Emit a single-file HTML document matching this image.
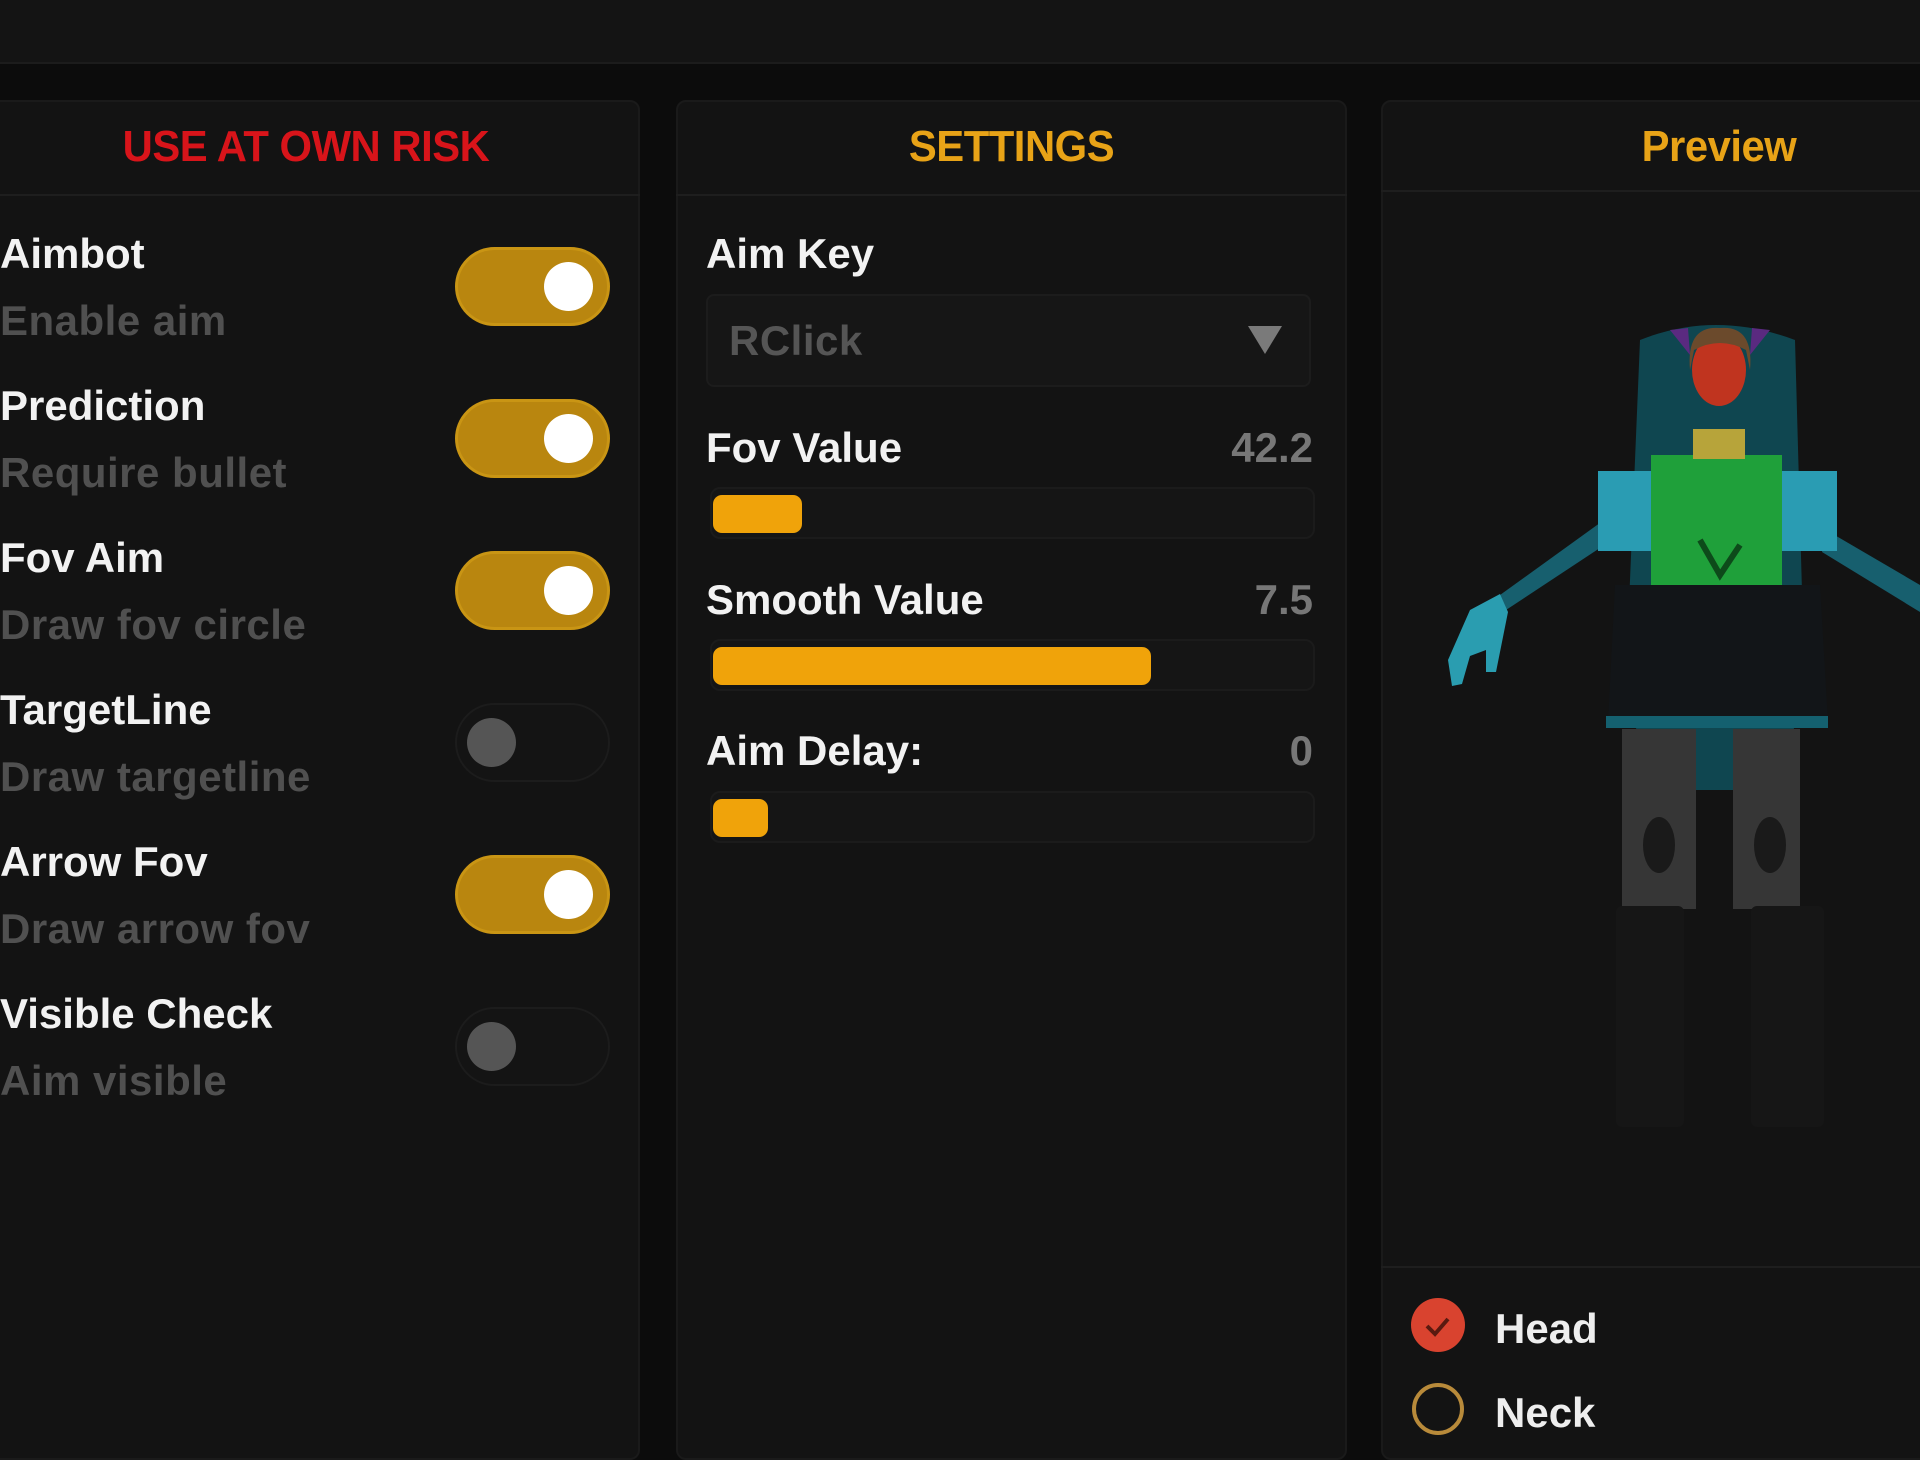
<!DOCTYPE html>
<html><head><meta charset="utf-8"><style>
*{margin:0;padding:0;box-sizing:border-box}
body{width:1920px;height:1440px;background:#0c0c0c;position:relative;overflow:hidden;font-family:"Liberation Sans",sans-serif;}
.a{position:absolute}
.panel{position:absolute;top:100px;bottom:-20px;background:#131313;border:2px solid #1a1a1a;border-radius:10px}
.title{position:absolute;top:100px;height:94px;line-height:94px;text-align:center;font-weight:bold;font-size:44px;letter-spacing:-0.5px;transform:scaleX(0.95)}
.hl{position:absolute;height:2px;background:#1e1e1e}
.lab{position:absolute;font-weight:bold;font-size:42px;color:#f2f2f2;letter-spacing:0px;line-height:1}
.sub{position:absolute;font-weight:bold;font-size:42px;color:#505050;letter-spacing:0.5px;line-height:1}
.tg{position:absolute;left:455px;width:155px;height:79px;border-radius:40px;background:#b9860f;border:3px solid #c99514}
.tg i{position:absolute;right:14px;top:12px;width:49px;height:49px;border-radius:50%;background:#fff}
.tg.off{background:#141414;border:2px solid #1c1c1c}
.tg.off i{left:10px;right:auto;top:13px;background:#555}
.track{position:absolute;left:710px;width:605px;height:52px;background:#151515;border:2px solid #1b1b1b;border-radius:10px}
.fill{position:absolute;left:713px;height:38px;background:#f0a30a;border-radius:9px}
.val{position:absolute;right:607px;font-weight:bold;font-size:42px;color:#777;line-height:1}
</style></head><body>
<div class="a" style="left:0;top:0;width:1920px;height:64px;background:#141414;border-bottom:2px solid #1c1c1c"></div>

<div class="panel" style="left:-20px;width:660px"></div>
<div class="panel" style="left:676px;width:671px"></div>
<div class="panel" style="left:1381px;width:560px"></div>

<div class="title" style="left:0;width:612px;color:#d8141a">USE AT OWN RISK</div>
<div class="title" style="left:676px;width:671px;color:#e8a317">SETTINGS</div>
<div class="title" style="left:1381px;width:676px;color:#e8a317">Preview</div>
<div class="hl" style="left:0;top:194px;width:640px"></div>
<div class="hl" style="left:676px;top:194px;width:671px"></div>
<div class="hl" style="left:1381px;top:190px;width:539px"></div>
<div class="hl" style="left:1381px;top:1266px;width:539px"></div>

<!-- left rows -->
<div class="lab" style="left:0;top:233px">Aimbot</div><div class="sub" style="left:0;top:300px">Enable aim</div>
<div class="lab" style="left:0;top:385px">Prediction</div><div class="sub" style="left:0;top:452px">Require bullet</div>
<div class="lab" style="left:0;top:537px">Fov Aim</div><div class="sub" style="left:0;top:604px">Draw fov circle</div>
<div class="lab" style="left:0;top:689px">TargetLine</div><div class="sub" style="left:0;top:756px">Draw targetline</div>
<div class="lab" style="left:0;top:841px">Arrow Fov</div><div class="sub" style="left:0;top:908px">Draw arrow fov</div>
<div class="lab" style="left:0;top:993px">Visible Check</div><div class="sub" style="left:0;top:1060px">Aim visible</div>
<div class="tg" style="top:247px"><i></i></div>
<div class="tg" style="top:399px"><i></i></div>
<div class="tg" style="top:551px"><i></i></div>
<div class="tg off" style="top:703px"><i></i></div>
<div class="tg" style="top:855px"><i></i></div>
<div class="tg off" style="top:1007px"><i></i></div>

<!-- middle -->
<div class="lab" style="left:706px;top:233px">Aim Key</div>
<div class="a" style="left:706px;top:294px;width:605px;height:93px;background:#161616;border:2px solid #1c1c1c;border-radius:8px"></div>
<div class="sub" style="left:729px;top:320px;color:#555">RClick</div>
<svg class="a" style="left:1246px;top:324px" width="38" height="32"><polygon points="2,2 36,2 19,30" fill="#7a7a7a"/></svg>

<div class="lab" style="left:706px;top:427px">Fov Value</div><div class="val" style="top:427px">42.2</div>
<div class="track" style="top:487px"></div><div class="fill" style="top:495px;width:89px"></div>
<div class="lab" style="left:706px;top:579px">Smooth Value</div><div class="val" style="top:579px">7.5</div>
<div class="track" style="top:639px"></div><div class="fill" style="top:647px;width:438px"></div>
<div class="lab" style="left:706px;top:730px">Aim Delay:</div><div class="val" style="top:730px">0</div>
<div class="track" style="top:791px"></div><div class="fill" style="top:799px;width:55px"></div>

<!-- character -->
<svg class="a" style="left:1381px;top:192px" width="539" height="1072" viewBox="1381 192 539 1072">
<path d="M1640 340 Q1715 310 1795 340 L1805 700 L1770 790 L1660 790 L1625 700 Z" fill="#0f4650"/>
<path d="M1604 520 L1500 595 L1506 610 L1612 540 Z" fill="#175f6e"/>
<path d="M1826 530 L1920 585 L1920 612 L1822 552 Z" fill="#175f6e"/>
<path d="M1500 594 L1470 610 L1448 660 L1452 686 L1462 684 L1470 656 L1486 650 L1486 672 L1496 672 L1508 612 Z" fill="#2a9db0"/>
<rect x="1598" y="471" width="58" height="80" fill="#2a9cb3"/>
<rect x="1776" y="471" width="61" height="80" fill="#2a9cb3"/>
<rect x="1651" y="455" width="131" height="130" fill="#1fa03a"/>
<path d="M1700 540 L1720 575 L1740 545" stroke="#0d4a1a" stroke-width="6" fill="none"/>
<rect x="1693" y="429" width="52" height="30" fill="#b7a43a"/>
<path d="M1615 585 L1820 585 L1828 722 L1608 722 Z" fill="#121518"/>
<rect x="1606" y="716" width="222" height="12" fill="#14606f"/>
<rect x="1622" y="729" width="74" height="180" fill="#363636"/>
<rect x="1733" y="729" width="67" height="180" fill="#363636"/>
<ellipse cx="1659" cy="845" rx="16" ry="28" fill="#1a1a1a"/>
<ellipse cx="1770" cy="845" rx="16" ry="28" fill="#1a1a1a"/>
<rect x="1616" y="906" width="68" height="221" rx="6" fill="#161616"/>
<rect x="1751" y="906" width="73" height="221" rx="6" fill="#161616"/>
<ellipse cx="1719" cy="370" rx="27" ry="36" fill="#c0341f"/>
<path d="M1690 370 Q1686 325 1720 328 Q1754 325 1750 370 L1746 350 Q1720 336 1694 350 Z" fill="#6b4a2c"/>
<path d="M1670 330 L1690 355 L1688 328 Z M1770 330 L1750 355 L1752 328 Z" fill="#5a2a80"/>
</svg>

<!-- radios -->
<svg class="a" style="left:1408px;top:1295px" width="60" height="140">
<circle cx="30" cy="30" r="27" fill="#d9432f"/>
<path d="M19 31 L27 39 L40 24" stroke="#5a1a10" stroke-width="4" fill="none"/>
<circle cx="30" cy="114" r="24" fill="none" stroke="#b88a3a" stroke-width="4"/>
</svg>
<div class="lab" style="left:1495px;top:1308px;color:#eee">Head</div>
<div class="lab" style="left:1495px;top:1392px;color:#eee">Neck</div>
</body></html>
